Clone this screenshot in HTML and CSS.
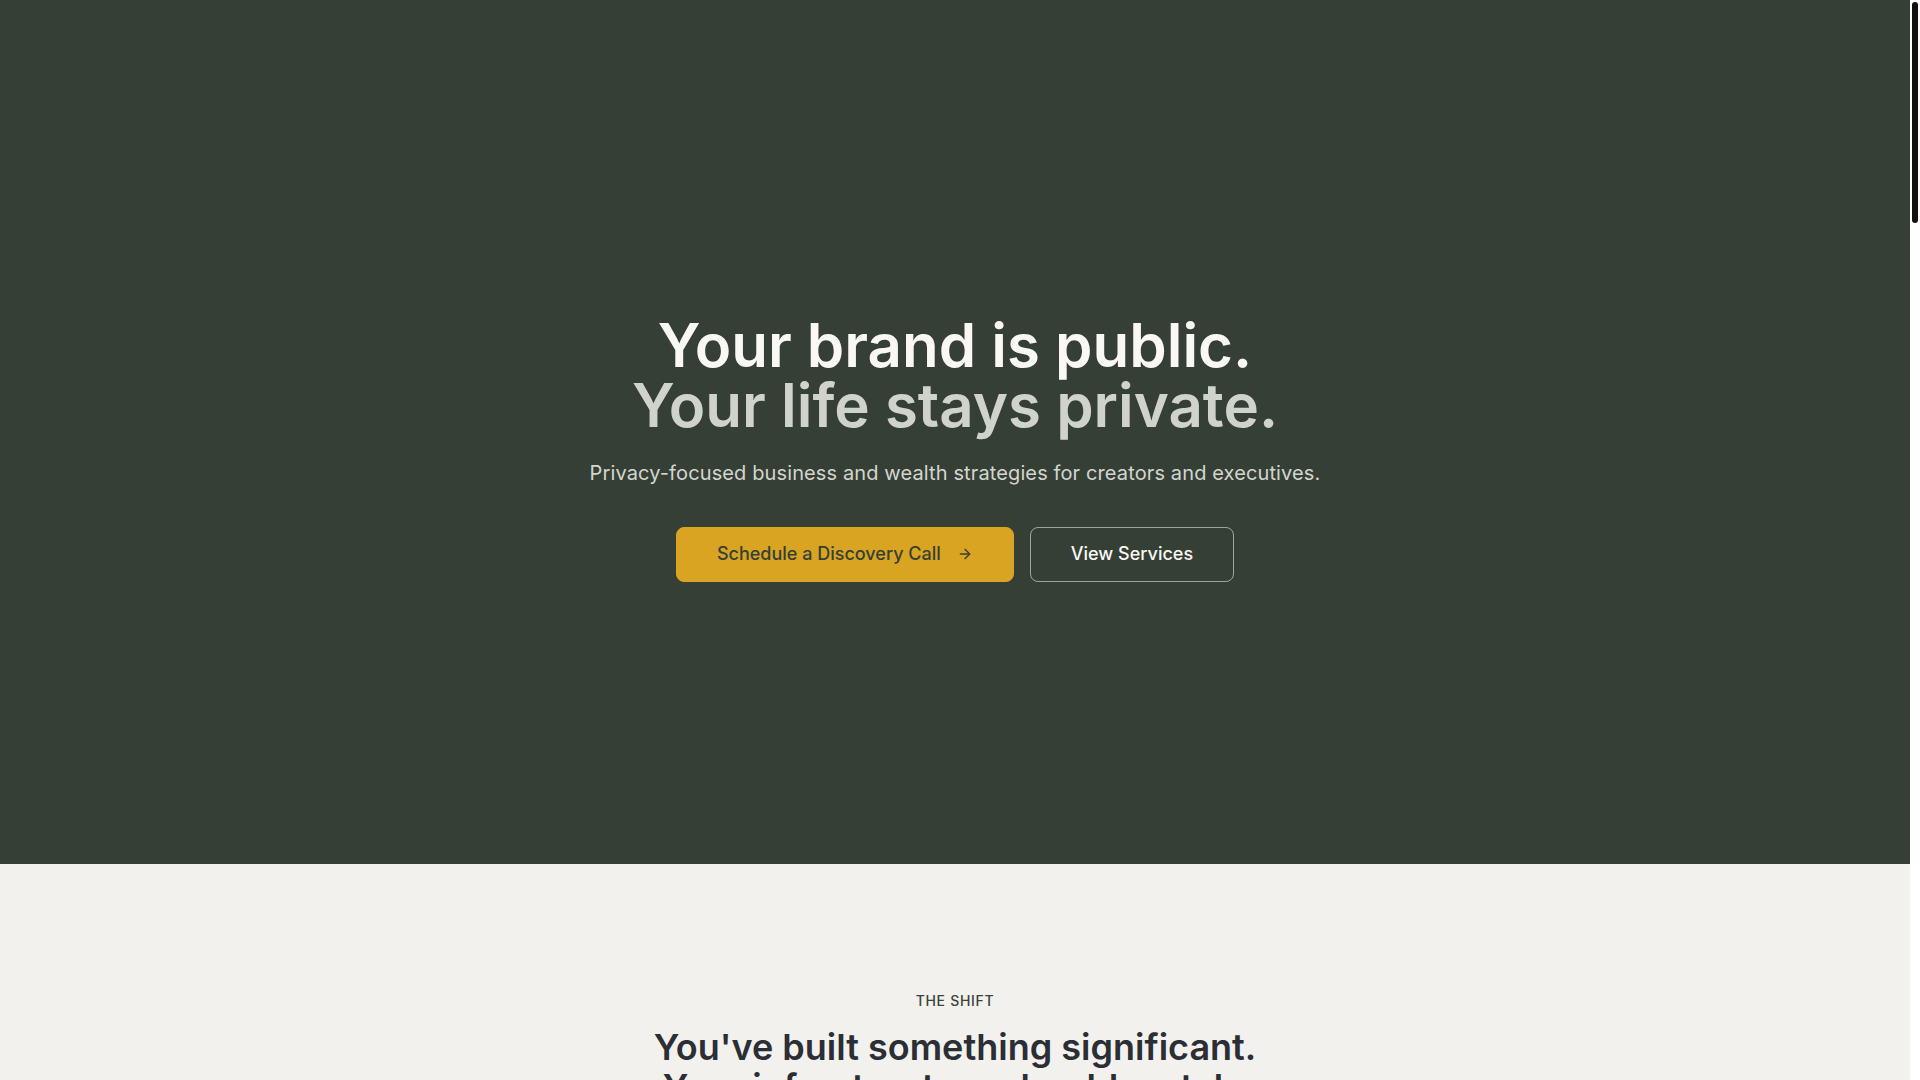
FILE: index.html
```html
<!DOCTYPE html>
<html lang="en">
<head>
<meta charset="utf-8">
<title>Private Wealth Strategies</title>
<link rel="stylesheet" href="styles.css">
</head>
<body>
<div class="viewport">
<main class="page">
  <section class="hero">
    <div class="hero-inner">
      <h1 class="hero-title">
        <span class="line-primary">Your brand is public.</span>
        <span class="line-secondary">Your life stays private.</span>
      </h1>
      <p class="hero-sub">Privacy-focused business and wealth strategies for creators and executives.</p>
      <div class="hero-actions">
        <a class="btn btn-primary" href="#contact">
          <span>Schedule a Discovery Call</span>
          <svg class="btn-icon" viewBox="0 0 24 24" width="16" height="16" fill="none" stroke="currentColor" stroke-width="2" stroke-linecap="round" stroke-linejoin="round" aria-hidden="true"><path d="M5 12h14"/><path d="m12 5 7 7-7 7"/></svg>
        </a>
        <a class="btn btn-outline" href="#services">View Services</a>
      </div>
    </div>
  </section>

  <section class="shift">
    <div class="shift-inner">
      <p class="eyebrow">THE SHIFT</p>
      <h2 class="section-title">
        <span>You've built something significant.</span>
        <span>Your infrastructure should match.</span>
      </h2>
      <p class="section-text">As your audience grows, so does your exposure. Your home address, your income, your family — all of it becomes easier to find. The structures that worked when you were starting out no longer protect what you've built.</p>
    </div>
  </section>

  <section class="services" id="services">
    <div class="shift-inner">
      <p class="eyebrow">SERVICES</p>
      <h2 class="section-title"><span>Quiet structures for visible people.</span></h2>
      <div class="service-grid">
        <div class="service-card"><h3>Entity Structuring</h3><p>Anonymous LLCs and holding companies that keep your name off public records.</p></div>
        <div class="service-card"><h3>Asset Protection</h3><p>Trusts and layered ownership designed to shield what you've earned.</p></div>
        <div class="service-card"><h3>Wealth Strategy</h3><p>Tax-efficient planning built around privacy from day one.</p></div>
      </div>
    </div>
  </section>

  <section class="cta" id="contact">
    <div class="shift-inner">
      <h2 class="section-title light"><span>Ready to protect what you've built?</span></h2>
      <a class="btn btn-primary" href="#contact"><span>Schedule a Discovery Call</span></a>
    </div>
  </section>
</main>
<div class="scrollbar" aria-hidden="true"><div class="scroll-thumb"></div></div>
</div>
</body>
</html>
```

FILE: styles.css
```css
* { box-sizing: border-box; }

html, body {
  margin: 0;
  height: 100%;
  overflow: hidden;
}

body {
  font-family: Inter, "Noto Sans", "Liberation Sans", sans-serif;
  background: #f2f1ed;
  color: #2c2f36;
  -webkit-font-smoothing: antialiased;
}

.viewport {
  display: flex;
  height: 100vh;
}

.page {
  flex: 1;
  min-width: 0;
  height: 100vh;
  overflow: hidden;
}

.scrollbar {
  flex: none;
  width: 10px;
  height: 100vh;
  background: #ffffff;
  padding: 2px;
}

.scroll-thumb {
  height: 221px;
  background: #111111;
  border-radius: 3px;
}

a { text-decoration: none; }

.hero {
  min-height: 80vh;
  background: #363f35;
  display: flex;
  align-items: center;
  justify-content: center;
  padding-top: 32px;
}

.hero-inner {
  display: flex;
  flex-direction: column;
  align-items: center;
  text-align: center;
}

.hero-title {
  margin: 0;
  font-size: 60px;
  line-height: 60px;
  font-weight: 600;
  letter-spacing: 0;
  display: flex;
  flex-direction: column;
}

.line-primary { color: #faf8f4; }
.line-secondary { color: #cfd3cc; }

.hero-sub {
  margin: 24px 0 0;
  font-size: 20px;
  line-height: 28px;
  color: #d3d6d0;
  letter-spacing: 0.006em;
}

.hero-actions {
  margin-top: 40px;
  display: flex;
  gap: 16px;
}

.btn {
  display: inline-flex;
  align-items: center;
  gap: 16px;
  height: 55px;
  padding: 0 40px;
  border-radius: 8px;
  font-size: 18px;
  font-weight: 500;
  line-height: 28px;
}

.btn-primary {
  background: #d8a421;
  color: #363f35;
  border: 1px solid #d8a421;
}

.btn-icon { flex: none; }

.btn-outline {
  border: 1px solid rgba(250, 248, 244, 0.55);
  color: #faf8f4;
  padding: 0 40px;
}

.shift {
  padding: 127px 24px 128px;
}

.shift-inner {
  max-width: 896px;
  margin: 0 auto;
  display: flex;
  flex-direction: column;
  align-items: center;
  text-align: center;
}

.eyebrow {
  margin: 0;
  font-size: 14px;
  line-height: 20px;
  font-weight: 500;
  letter-spacing: 0.05em;
  color: #3b4239;
}

.section-title {
  margin: 16px 0 0;
  font-size: 36px;
  line-height: 40px;
  font-weight: 600;
  letter-spacing: 0;
  color: #2b2e35;
  display: flex;
  flex-direction: column;
}

.section-title.light { color: #faf8f4; }

.section-text {
  margin: 32px 0 0;
  max-width: 672px;
  font-size: 18px;
  line-height: 30px;
  color: #5b6058;
}

.services {
  padding: 128px 24px;
  background: #ffffff;
}

.service-grid {
  margin-top: 64px;
  display: grid;
  grid-template-columns: repeat(3, 1fr);
  gap: 24px;
  text-align: left;
}

.service-card {
  padding: 32px;
  border: 1px solid #e4e2dc;
  border-radius: 12px;
}

.service-card h3 {
  margin: 0 0 12px;
  font-size: 20px;
  font-weight: 600;
}

.service-card p {
  margin: 0;
  font-size: 16px;
  line-height: 26px;
  color: #5b6058;
}

.cta {
  padding: 128px 24px;
  background: #363f35;
}

.cta .btn { margin-top: 40px; }
```
